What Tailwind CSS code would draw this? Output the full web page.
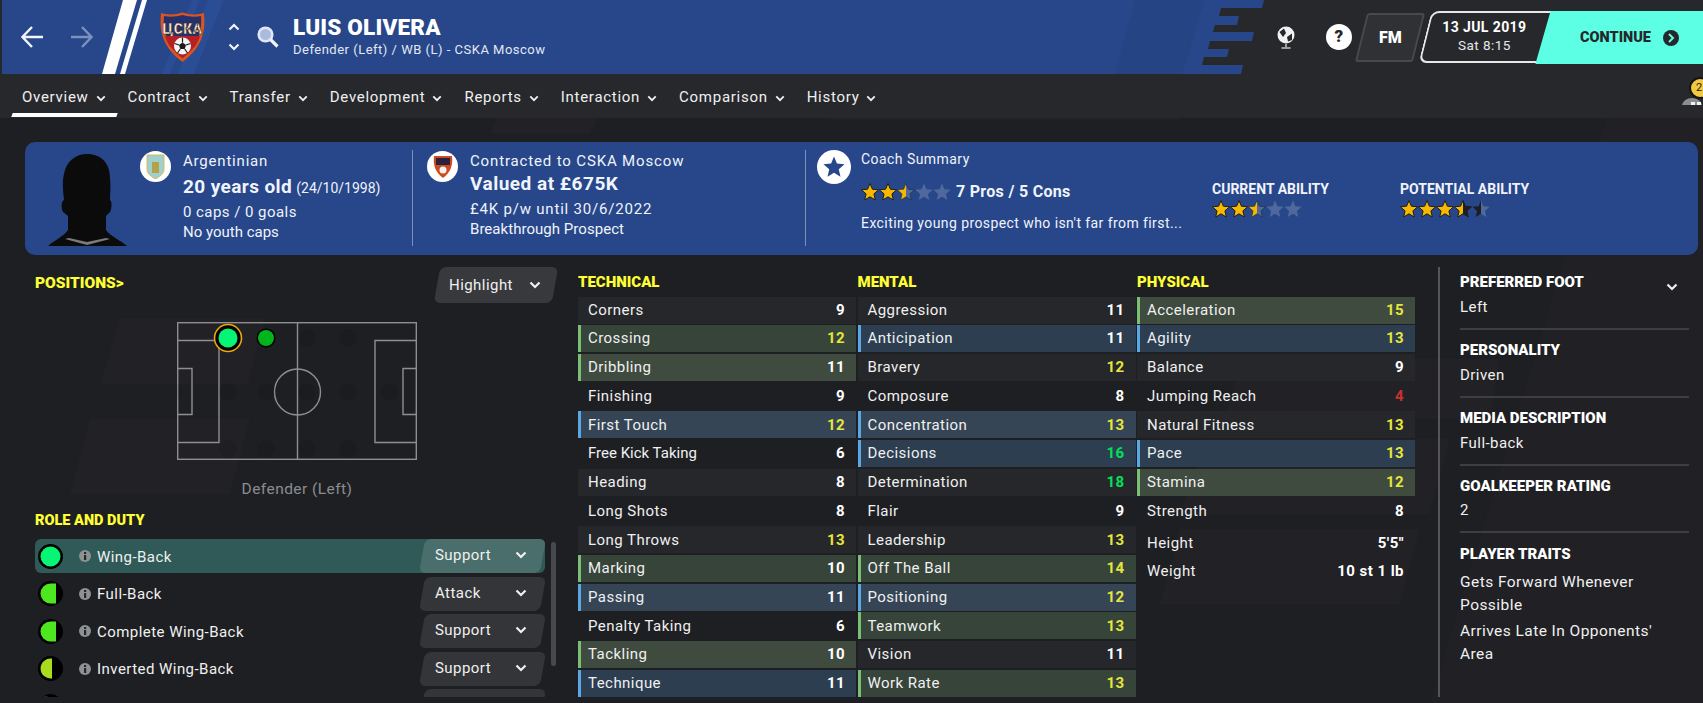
<!DOCTYPE html>
<html lang="en">
<head>
  <meta charset="UTF-8" />
  <title>Luis Olivera - Overview</title>
  <script src="https://cdn.jsdelivr.net/npm/@tailwindcss/browser@4"></script>
</head>
<body class="relative w-[1703px] h-[703px] overflow-hidden bg-[#1e1f23] text-[#f0f0f0] font-['Roboto',sans-serif] text-[15px] tracking-[0.45px]">

  <!-- shared icons -->
  <svg width="0" height="0" class="absolute">
    <defs>
      <symbol id="star" viewBox="0 0 18 18"><polygon points="9,0.5 11.4,6.2 17.6,6.8 12.9,10.9 14.3,17 9,13.8 3.7,17 5.1,10.9 0.4,6.8 6.6,6.2" /></symbol>
      <symbol id="chev" viewBox="0 0 12 8"><path d="M1.5 1.5 L6 6 L10.5 1.5" fill="none" stroke="currentColor" stroke-width="2.2" /></symbol>
      <symbol id="info" viewBox="0 0 12 12"><circle cx="6" cy="6" r="6" fill="#8d9190" /><rect x="5" y="5" width="2.2" height="5" fill="#26272b" /><rect x="5" y="2" width="2.2" height="2" fill="#26272b" /></symbol>
      <linearGradient id="halfGold"><stop offset="50%" stop-color="#f7b900" /><stop offset="50%" stop-color="#50699c" /></linearGradient>
      <linearGradient id="halfBlack"><stop offset="50%" stop-color="#f7b900" /><stop offset="50%" stop-color="#1d1e22" /></linearGradient>
      <linearGradient id="halfGrey"><stop offset="50%" stop-color="#1d1e22" /><stop offset="50%" stop-color="#50699c" /></linearGradient>
    </defs>
  </svg>

  <!-- faint background bands -->
  <svg class="absolute left-0 top-[74px]" width="1703" height="629" fill="#25262a" fill-opacity="0.4">
    <polygon points="120,245 265,245 248,310 100,310" />
    <polygon points="90,345 250,345 230,420 70,420" />
    <polygon points="1240,285 1500,285 1490,345 1225,345" />
    <polygon points="1205,365 1450,365 1430,440 1180,440" />
    <polygon points="1180,455 1420,455 1400,530 1160,530" />
    <polygon points="1620,0 1703,0 1703,629 1430,629" fill="#222327" />
    <polygon points="520,0 620,0 590,60 490,60" />
    <polygon points="850,0 1200,0 1180,46 830,46" />
  </svg>

  <!-- header -->
  <header class="relative h-[74px] flex items-center bg-[#27282c] overflow-hidden">
    <svg class="absolute left-0 top-0" width="1270" height="74">
      <polygon fill="#27478a" points="2,0 1264,0 1262,8 1221,8 1219,16 1239,16 1237,25 1215,25 1213,32 1254,32 1252,41 1210,41 1208,49 1229,49 1227,57 1204,57 1202,65 1243,65 1241,74 2,74" />
      <polygon fill="#2b4d95" points="192,0 200,0 170,74 162,74" />
      <polygon fill="#2b4d95" points="208,0 224,0 194,74 178,74" />
      <polygon fill="#24437f" points="1135,0 1205,0 1182,74 1115,74" fill-opacity="0.6" />
      <polygon fill="#ffffff" points="123,0 137,0 115,74 102,74" />
      <polygon fill="#ffffff" points="142,0 147,0 125,74 120,74" />
    </svg>
    <div class="relative flex items-center w-full pl-[21px]">
      <svg width="22" height="22" viewBox="0 0 22 22" fill="none" stroke="#f2f4fa" stroke-width="2.4"><path d="M11 1 L1.5 11 L11 21 M2 11 H22" /></svg>
      <svg class="ml-[28px]" width="22" height="22" viewBox="0 0 22 22" fill="none" stroke="#7d91be" stroke-width="2.4"><path d="M11 1 L20.5 11 L11 21 M20 11 H0" /></svg>
      <svg class="ml-[67px]" width="45" height="50" viewBox="0 0 45 50">
        <path d="M22.5 0.5 C30 3 38 3 44 1 C45.500 17 44 34 22.5 50 C1 34 -0.500 17 1 1 C7 3 15 3 22.5 0.500 Z" fill="#d9541e" />
        <path d="M22.5 3 C29 5 36 5 41 4 C42 17 40 31 22.5 46 C5 31 3 17 4 4 C9 5 16 5 22.5 3 Z" fill="#23316e" />
        <path d="M5 24 H40 C38 32 32 39 22.5 46 C13 39 7 32 5 24 Z" fill="#b62025" />
        <text x="22.5" y="22" text-anchor="middle" font-family="Roboto" font-weight="900" font-size="14" fill="#f7ecd0" stroke="#40200f" stroke-width="0.5" textLength="40" lengthAdjust="spacingAndGlyphs">ЦСКА</text>
        <circle cx="22.5" cy="34" r="8.500" fill="#f5f5f5" />
        <polygon points="22.5,30.500 26,33 24.700,37 20.300,37 19,33" fill="#1a1a1a" />
        <path d="M22.5 25.500 V30.500 M26 33 L30.500 31.500 M24.700 37 L27.500 41 M20.300 37 L17.500 41 M19 33 L14.500 31.500" stroke="#1a1a1a" stroke-width="1.200" />
      </svg>
      <div class="ml-[23px] flex flex-col gap-[12px] text-[#f2f4fa]">
        <svg class="rotate-180" width="12" height="8"><use href="#chev" /></svg>
        <svg width="12" height="8"><use href="#chev" /></svg>
      </div>
      <svg class="ml-[17px]" width="22" height="22" viewBox="0 0 22 22" fill="none"><circle cx="8.5" cy="8.5" r="6.8" stroke="#dfe6f5" stroke-width="2.6" fill="#a9bbdf" /><path d="M13.5 13.5 L20.5 20.5" stroke="#f2f4fa" stroke-width="3.2" /></svg>
      <div class="ml-[14px]">
        <div class="-mt-[2px] mb-[2px] text-[22.5px] leading-[26px] font-black tracking-[0.2px] text-white">LUIS OLIVERA</div>
        <div class="text-[13px] leading-[16px] text-[#e3e8f3] tracking-[0.5px]">Defender (Left) / WB (L) - CSKA Moscow</div>
      </div>

      <div class="ml-auto flex items-center">
        <svg width="20" height="23" viewBox="0 0 20 23"><circle cx="10" cy="9" r="8.500" fill="#f2f2f2" /><path d="M3.500 6 L8 2.500 L10 7 L7 11 Z M11 11 L16 7.500 L16 14 L12 15.500 Z" fill="#27282c" /><path d="M10 18 V21 M5.500 22 H14.500" stroke="#c4c4c4" stroke-width="1.600" /></svg>
        <div class="ml-[30px] w-[26px] h-[26px] rounded-full bg-white text-[#27282c] flex items-center justify-center text-[17px] font-black">?</div>
        <div class="ml-[9px] w-[58px] h-[49px] -skew-x-[14deg] bg-[#303135] border-2 border-[#48494d] rounded-[3px] flex items-center justify-center">
          <span class="skew-x-[14deg] text-[16px] font-black text-white tracking-normal">FM</span>
        </div>
        <div class="ml-[6px] w-[123px] h-[52px] -skew-x-[14deg] bg-[#27282c] border-2 border-r-0 border-[#e8e8e8] rounded-l-[8px]">
          <div class="skew-x-[14deg] flex flex-col items-center pr-[8px] pt-[4px]">
            <span class="text-[14px] leading-[20px] font-bold text-white tracking-[0.4px]">13 JUL 2019</span>
            <span class="text-[13.5px] leading-[17px] text-[#e8e8e8]">Sat 8:15</span>
          </div>
        </div>
        <div class="-ml-[5px] -mr-[20px] w-[180px] h-[53px] -skew-x-[16deg] bg-[#5cffe4]">
          <div class="skew-x-[16deg] h-full flex items-center pl-[37px] text-[#26272b]">
            <span class="text-[14.5px] font-black tracking-normal">CONTINUE</span>
            <svg class="ml-[12px]" width="16" height="16" viewBox="0 0 16 16"><circle cx="8" cy="8" r="8" fill="#26272b" /><path d="M6 4 L10 8 L6 12" fill="none" stroke="#5cffe4" stroke-width="2" /></svg>
          </div>
        </div>
      </div>
    </div>
  </header>

  <!-- tabs -->
  <nav class="relative h-[44px] flex items-center pl-[22px] pt-[2px] bg-[#27282c] text-[#f0f0f0] tracking-[0.72px]">
    <div class="relative flex items-center mr-[22px]">Overview<svg class="ml-[7px] mt-[2px]" width="10" height="7" ><use href="#chev" /></svg>
      <span class="absolute left-[-10px] right-[-11px] top-[27px] h-[4px] bg-white -skew-x-[20deg]"></span>
    </div>
    <div class="flex items-center mr-[22px]">Contract<svg class="ml-[7px] mt-[2px]" width="10" height="7"><use href="#chev" /></svg></div>
    <div class="flex items-center mr-[22px]">Transfer<svg class="ml-[7px] mt-[2px]" width="10" height="7"><use href="#chev" /></svg></div>
    <div class="flex items-center mr-[22px]">Development<svg class="ml-[7px] mt-[2px]" width="10" height="7"><use href="#chev" /></svg></div>
    <div class="flex items-center mr-[22px]">Reports<svg class="ml-[7px] mt-[2px]" width="10" height="7"><use href="#chev" /></svg></div>
    <div class="flex items-center mr-[22px]">Interaction<svg class="ml-[7px] mt-[2px]" width="10" height="7"><use href="#chev" /></svg></div>
    <div class="flex items-center mr-[22px]">Comparison<svg class="ml-[7px] mt-[2px]" width="10" height="7"><use href="#chev" /></svg></div>
    <div class="flex items-center mr-[22px]">History<svg class="ml-[7px] mt-[2px]" width="10" height="7"><use href="#chev" /></svg></div>
  </nav>

  <!-- notification badge -->
  <div class="absolute left-[1680px] top-[77px] w-[24px] h-[30px]">
    <svg class="absolute left-0 top-[19px]" width="24" height="9" viewBox="0 0 24 9"><path d="M2 9 C3 5 7 2 12 2 C17 2 21 5 22 9 Z" fill="#8d8d8d" /><rect x="11" y="6" width="4" height="3" fill="#f2f2f2" /><rect x="17" y="6" width="4" height="3" fill="#f2f2f2" /></svg>
    <div class="absolute left-[9px] top-0 w-[22px] h-[22px] rounded-full bg-[#f5c93e] border-2 border-[#141414] text-[11px] leading-[18px] pl-[5px] tracking-normal text-[#1a1a1a]">2</div>
  </div>

  <!-- summary card -->
  <section class="relative ml-[25px] mt-[24px] w-[1673px] h-[113px] rounded-[10px] bg-[#27478a] flex pt-[8px] text-[#f0f3fa]">
    <div class="w-[388px] h-[96px] border-r border-white/40 flex">
      <svg class="ml-[23px] mt-[4px]" width="79" height="92" viewBox="0 0 79 92">
        <path d="M39 0 C50 0 62 6 62 24 C63 32 62 40 62 46 C64 47 64 54 62 58 L58 62 L58 76 C62 82 72 86 79 92 L0 92 C7 86 16 82 20 76 L20 62 L15 58 C13 54 13 47 16 46 C15 36 14 28 16 20 C18 7 28 0 39 0 Z" fill="#0b0b0b" />
        <path d="M17 85 L39 91 L62 85 L58 84 L39 88 L21 84 Z" fill="#7b7b7b" />
      </svg>
      <div class="ml-[13px] mt-[1px] w-[31px] h-[31px] rounded-full bg-white flex items-center justify-center shrink-0">
        <svg width="19" height="25" viewBox="0 0 19 25"><path d="M1 1 H18 V15 C18 20 13 23 9.5 25 C6 23 1 20 1 15 Z" fill="#9fd0cf" stroke="#d8b952" /><rect x="6" y="8" width="7" height="11" fill="#b5a247" /></svg>
      </div>
      <div class="ml-[12px] text-[15px] tracking-[0.4px]">
        <div class="mt-[1px] leading-[20px] tracking-[0.8px]">Argentinian</div>
        <div class="mt-[4px] leading-[24px] whitespace-nowrap"><span class="text-[19px] font-bold tracking-[0.4px]">20 years old</span> <span class="text-[14px] tracking-normal">(24/10/1998)</span></div>
        <div class="mt-[2px] leading-[20px] tracking-[0.45px]">0 caps / 0 goals</div>
        <div class="leading-[20px] tracking-[0px]">No youth caps</div>
      </div>
    </div>
    <div class="w-[393px] h-[96px] border-r border-white/40 flex">
      <div class="ml-[14px] mt-[1px] w-[31px] h-[31px] rounded-full bg-white flex items-center justify-center shrink-0">
        <svg width="20" height="23" viewBox="0 0 20 23"><path d="M1 1 H19 C20 10 18 17 10 23 C2 17 0 10 1 1 Z" fill="#cf4a1d" /><path d="M3 3 H17 V10 H3 Z" fill="#2a2140" /><circle cx="10" cy="15" r="3.5" fill="#f2f2f2" /></svg>
      </div>
      <div class="ml-[12px] text-[15px]">
        <div class="mt-[1px] leading-[20px] tracking-[0.85px] whitespace-nowrap">Contracted to CSKA Moscow</div>
        <div class="mt-[1px] leading-[24px] text-[19px] font-bold tracking-[0.5px]">Valued at £675K</div>
        <div class="mt-[3px] leading-[20px] tracking-[0.8px]">£4K p/w until 30/6/2022</div>
        <div class="leading-[20px] tracking-[0.04px]">Breakthrough Prospect</div>
      </div>
    </div>
    <div class="w-[406px] flex">
      <div class="ml-[11px] w-[34px] h-[34px] rounded-full bg-white flex items-center justify-center shrink-0">
        <svg class="text-[#27478a]" width="22" height="22" fill="currentColor"><use href="#star" /></svg>
      </div>
      <div class="ml-[10px]">
        <div class="-mt-[1px] leading-[20px] text-[14px]">Coach Summary</div>
        <div class="mt-[13px] h-[20px] flex items-center">
          <svg width="18" height="18" fill="#f7b900" stroke="#1d1e22"><use href="#star" /></svg>
          <svg width="18" height="18" fill="#f7b900" stroke="#1d1e22"><use href="#star" /></svg>
          <svg width="18" height="18" fill="url(#halfGold)" stroke="#1d1e22" stroke-opacity="0.5"><use href="#star" /></svg>
          <svg width="18" height="18" fill="#50699c"><use href="#star" /></svg>
          <svg width="18" height="18" fill="#50699c"><use href="#star" /></svg>
          <span class="ml-[5px] text-[16px] font-bold tracking-[0.3px] whitespace-nowrap">7 Pros / 5 Cons</span>
        </div>
        <div class="mt-[11px] leading-[20px] text-[14px] tracking-[0.42px] whitespace-nowrap">Exciting young prospect who isn't far from first...</div>
      </div>
    </div>
    <div class="w-[188px] pt-[30px]">
      <div class="leading-[18px] text-[14px] font-bold tracking-normal whitespace-nowrap">CURRENT ABILITY</div>
      <div class="mt-[2px] flex">
        <svg width="18" height="18" fill="#f7b900" stroke="#1d1e22"><use href="#star" /></svg>
        <svg width="18" height="18" fill="#f7b900" stroke="#1d1e22"><use href="#star" /></svg>
        <svg width="18" height="18" fill="url(#halfGold)" stroke="#1d1e22" stroke-opacity="0.5"><use href="#star" /></svg>
        <svg width="18" height="18" fill="#50699c"><use href="#star" /></svg>
        <svg width="18" height="18" fill="#50699c"><use href="#star" /></svg>
      </div>
    </div>
    <div class="pt-[30px]">
      <div class="leading-[18px] text-[14px] font-bold tracking-normal whitespace-nowrap">POTENTIAL ABILITY</div>
      <div class="mt-[2px] flex">
        <svg width="18" height="18" fill="#f7b900" stroke="#1d1e22"><use href="#star" /></svg>
        <svg width="18" height="18" fill="#f7b900" stroke="#1d1e22"><use href="#star" /></svg>
        <svg width="18" height="18" fill="#f7b900" stroke="#1d1e22"><use href="#star" /></svg>
        <svg width="18" height="18" fill="url(#halfBlack)" stroke="#1d1e22"><use href="#star" /></svg>
        <svg width="18" height="18" fill="url(#halfGrey)"><use href="#star" /></svg>
      </div>
    </div>
  </section>

  <main class="relative flex pl-[35px] h-[448px] overflow-hidden">
    <!-- positions and roles -->
    <div class="w-[523px] shrink-0">
      <div class="pt-[12px] flex justify-between">
        <div class="mt-[6px] text-[15.500px] leading-[20px] font-black tracking-normal text-[#ffff33]">POSITIONS&gt;</div>
        <div class="w-[118px] mr-[3px] h-[36px] -skew-x-[10deg] rounded-[6px] bg-[#38393d]">
          <div class="skew-x-[10deg] h-full flex items-center justify-between pl-[12px] pr-[14px]">Highlight<svg width="12" height="8"><use href="#chev" /></svg></div>
        </div>
      </div>
      <svg class="ml-[142px] mt-[19px]" width="240" height="138" viewBox="0 0 240 138" fill="none" stroke="#8f8f8f" stroke-width="1.4">
        <rect x="0.7" y="0.7" width="238.6" height="136.6" />
        <path d="M0 18.5 H42 V120.5 H0 M0 46.5 H15 V92.5 H0 M240 18.5 H198 V120.5 H240 M240 46.5 H226 V92.5 H240 M120.5 0 V138" />
        <circle cx="120.5" cy="70" r="23" />
        <g fill="#000" fill-opacity="0.07" stroke="none">
          <circle cx="130" cy="16" r="9" /><circle cx="171" cy="16" r="9" />
          <circle cx="-3" cy="70" r="9" /><circle cx="51" cy="70" r="9" /><circle cx="89" cy="70" r="9" /><circle cx="130" cy="70" r="9" /><circle cx="171" cy="70" r="9" /><circle cx="213" cy="70" r="9" />
          <circle cx="51" cy="127" r="9" /><circle cx="89" cy="127" r="9" /><circle cx="130" cy="127" r="9" /><circle cx="171" cy="127" r="9" />
        </g>
        <circle cx="51" cy="16" r="13.5" fill="#000" stroke="#e9a90e" stroke-width="1.6" />
        <circle cx="51" cy="16" r="9.5" fill="#06f574" stroke="none" />
        <circle cx="89" cy="16" r="9.5" fill="#000" stroke="none" />
        <circle cx="89" cy="16" r="8" fill="#02b41c" stroke="none" />
      </svg>
      <div class="mt-[19px] ml-[142px] w-[240px] text-center leading-[20px] text-[15.500px] text-[#8b8c8f]">Defender (Left)</div>

      <div class="mt-[12px] text-[14.5px] leading-[20px] font-black tracking-normal text-[#ffff33]">ROLE AND DUTY</div>
      <div class="mt-[8px] h-[158px] overflow-hidden flex">
        <div class="w-[510px] flex flex-col gap-[3.5px]">
          <div class="h-[34px] shrink-0 flex items-center pl-[3px] rounded-[6px] bg-[#2f5a58]">
            <svg width="25" height="25"><circle cx="12.5" cy="12.5" r="12.5" fill="#000" /><circle cx="12.5" cy="12.5" r="10" fill="#06f574" /></svg>
            <svg class="ml-[16px]" width="12" height="12"><use href="#info" /></svg>
            <span class="ml-[6px] mt-[2px]">Wing-Back</span>
            <div class="ml-auto mr-[2px] w-[121px] h-[34px] -skew-x-[10deg] rounded-[6px] bg-[#4a6e6b]">
              <div class="skew-x-[10deg] h-full flex items-center justify-between pb-[2px] pl-[13px] pr-[16px]">Support<svg width="12" height="8"><use href="#chev" /></svg></div>
            </div>
          </div>
          <div class="h-[34px] shrink-0 flex items-center pl-[3px]">
            <svg width="25" height="25"><circle cx="12.5" cy="12.5" r="12.5" fill="#000" /><path d="M12.5 2.5 H18 V22.5 H12.5 A10 10 0 0 1 12.5 2.5 Z" fill="#4ee61e" /></svg>
            <svg class="ml-[16px]" width="12" height="12"><use href="#info" /></svg>
            <span class="ml-[6px] mt-[2px]">Full-Back</span>
            <div class="ml-auto mr-[2px] w-[121px] h-[34px] -skew-x-[10deg] rounded-[6px] bg-[#343538]">
              <div class="skew-x-[10deg] h-full flex items-center justify-between pb-[2px] pl-[13px] pr-[16px]">Attack<svg width="12" height="8"><use href="#chev" /></svg></div>
            </div>
          </div>
          <div class="h-[34px] shrink-0 flex items-center pl-[3px]">
            <svg width="25" height="25"><circle cx="12.5" cy="12.5" r="12.5" fill="#000" /><path d="M12.5 2.5 H18 V22.5 H12.5 A10 10 0 0 1 12.5 2.5 Z" fill="#4ee61e" /></svg>
            <svg class="ml-[16px]" width="12" height="12"><use href="#info" /></svg>
            <span class="ml-[6px] mt-[2px]">Complete Wing-Back</span>
            <div class="ml-auto mr-[2px] w-[121px] h-[34px] -skew-x-[10deg] rounded-[6px] bg-[#343538]">
              <div class="skew-x-[10deg] h-full flex items-center justify-between pb-[2px] pl-[13px] pr-[16px]">Support<svg width="12" height="8"><use href="#chev" /></svg></div>
            </div>
          </div>
          <div class="h-[34px] shrink-0 flex items-center pl-[3px]">
            <svg width="25" height="25"><circle cx="12.5" cy="12.5" r="12.5" fill="#000" /><path d="M14 2.6 A10 10 0 1 0 14 22.4 Z" fill="#a9dc1e" /></svg>
            <svg class="ml-[16px]" width="12" height="12"><use href="#info" /></svg>
            <span class="ml-[6px] mt-[2px]">Inverted Wing-Back</span>
            <div class="ml-auto mr-[2px] w-[121px] h-[34px] -skew-x-[10deg] rounded-[6px] bg-[#343538]">
              <div class="skew-x-[10deg] h-full flex items-center justify-between pb-[2px] pl-[13px] pr-[16px]">Support<svg width="12" height="8"><use href="#chev" /></svg></div>
            </div>
          </div>
          <div class="h-[34px] shrink-0 flex items-center pl-[3px]">
            <svg width="25" height="25"><circle cx="12.5" cy="12.5" r="12.5" fill="#000" /><path d="M10 2.8 A10 10 0 1 0 10 22.2 Z" fill="#5c6a10" /></svg>
            <div class="ml-auto mr-[2px] w-[121px] h-[34px] -skew-x-[10deg] rounded-[6px] bg-[#343538]"></div>
          </div>
        </div>
        <div class="ml-[6px] mt-[3px] w-[5px] h-[124px] rounded-full bg-[#48494d]"></div>
      </div>
    </div>

    <!-- attributes -->
    <div class="ml-[20px] w-[837px] shrink-0 pt-[17px] grid grid-cols-[278px_278px_278px] gap-x-[1.5px] content-start">
      <div>
        <div class="h-[20px] mb-[4.500px] text-[15px] leading-[20px] font-black tracking-normal text-[#ffff33]">TECHNICAL</div>
        <div class="flex flex-col gap-[1.73px]">
          <div class="h-[27px] flex items-center justify-between border-l-[3px] border-transparent pl-[7px] pr-[11px] bg-[#26272b]"><span>Corners</span><b class="text-white">9</b></div>
          <div class="h-[27px] flex items-center justify-between border-l-[3px] border-[#7ac074] pl-[7px] pr-[11px] bg-[#36443a]"><span>Crossing</span><b class="text-[#e6e63c]">12</b></div>
          <div class="h-[27px] flex items-center justify-between border-l-[3px] border-[#7ac074] pl-[7px] pr-[11px] bg-[#3f4b3f]"><span>Dribbling</span><b class="text-white">11</b></div>
          <div class="h-[27px] flex items-center justify-between border-l-[3px] border-transparent pl-[7px] pr-[11px]"><span>Finishing</span><b class="text-white">9</b></div>
          <div class="h-[27px] flex items-center justify-between border-l-[3px] border-[#5aa7e6] pl-[7px] pr-[11px] bg-[#354555]"><span>First Touch</span><b class="text-[#e6e63c]">12</b></div>
          <div class="h-[27px] flex items-center justify-between border-l-[3px] border-transparent pl-[7px] pr-[11px]"><span class="tracking-[0px]">Free Kick Taking</span><b class="text-white">6</b></div>
          <div class="h-[27px] flex items-center justify-between border-l-[3px] border-transparent pl-[7px] pr-[11px] bg-[#26272b]"><span>Heading</span><b class="text-white">8</b></div>
          <div class="h-[27px] flex items-center justify-between border-l-[3px] border-transparent pl-[7px] pr-[11px]"><span>Long Shots</span><b class="text-white">8</b></div>
          <div class="h-[27px] flex items-center justify-between border-l-[3px] border-transparent pl-[7px] pr-[11px] bg-[#26272b]"><span>Long Throws</span><b class="text-[#e6e63c]">13</b></div>
          <div class="h-[27px] flex items-center justify-between border-l-[3px] border-[#7ac074] pl-[7px] pr-[11px] bg-[#36443a]"><span>Marking</span><b class="text-white">10</b></div>
          <div class="h-[27px] flex items-center justify-between border-l-[3px] border-[#5aa7e6] pl-[7px] pr-[11px] bg-[#354555]"><span>Passing</span><b class="text-white">11</b></div>
          <div class="h-[27px] flex items-center justify-between border-l-[3px] border-transparent pl-[7px] pr-[11px]"><span>Penalty Taking</span><b class="text-white">6</b></div>
          <div class="h-[27px] flex items-center justify-between border-l-[3px] border-[#7ac074] pl-[7px] pr-[11px] bg-[#3f4b3f]"><span>Tackling</span><b class="text-white">10</b></div>
          <div class="h-[27px] flex items-center justify-between border-l-[3px] border-[#5aa7e6] pl-[7px] pr-[11px] bg-[#2c3e50]"><span>Technique</span><b class="text-white">11</b></div>
        </div>
      </div>
      <div>
        <div class="h-[20px] mb-[4.500px] text-[15px] leading-[20px] font-black tracking-normal text-[#ffff33]">MENTAL</div>
        <div class="flex flex-col gap-[1.73px]">
          <div class="h-[27px] flex items-center justify-between border-l-[3px] border-transparent pl-[7px] pr-[11px] bg-[#26272b]"><span>Aggression</span><b class="text-white">11</b></div>
          <div class="h-[27px] flex items-center justify-between border-l-[3px] border-[#5aa7e6] pl-[7px] pr-[11px] bg-[#2c3e50]"><span>Anticipation</span><b class="text-white">11</b></div>
          <div class="h-[27px] flex items-center justify-between border-l-[3px] border-transparent pl-[7px] pr-[11px] bg-[#26272b]"><span>Bravery</span><b class="text-[#e6e63c]">12</b></div>
          <div class="h-[27px] flex items-center justify-between border-l-[3px] border-transparent pl-[7px] pr-[11px]"><span>Composure</span><b class="text-white">8</b></div>
          <div class="h-[27px] flex items-center justify-between border-l-[3px] border-[#5aa7e6] pl-[7px] pr-[11px] bg-[#354555]"><span>Concentration</span><b class="text-[#e6e63c]">13</b></div>
          <div class="h-[27px] flex items-center justify-between border-l-[3px] border-[#5aa7e6] pl-[7px] pr-[11px] bg-[#2c3e50]"><span>Decisions</span><b class="text-[#00e05a]">16</b></div>
          <div class="h-[27px] flex items-center justify-between border-l-[3px] border-transparent pl-[7px] pr-[11px] bg-[#26272b]"><span>Determination</span><b class="text-[#00e05a]">18</b></div>
          <div class="h-[27px] flex items-center justify-between border-l-[3px] border-transparent pl-[7px] pr-[11px]"><span>Flair</span><b class="text-white">9</b></div>
          <div class="h-[27px] flex items-center justify-between border-l-[3px] border-transparent pl-[7px] pr-[11px] bg-[#26272b]"><span>Leadership</span><b class="text-[#e6e63c]">13</b></div>
          <div class="h-[27px] flex items-center justify-between border-l-[3px] border-[#7ac074] pl-[7px] pr-[11px] bg-[#36443a]"><span>Off The Ball</span><b class="text-[#e6e63c]">14</b></div>
          <div class="h-[27px] flex items-center justify-between border-l-[3px] border-[#5aa7e6] pl-[7px] pr-[11px] bg-[#354555]"><span>Positioning</span><b class="text-[#e6e63c]">12</b></div>
          <div class="h-[27px] flex items-center justify-between border-l-[3px] border-[#7ac074] pl-[7px] pr-[11px] bg-[#36443a]"><span>Teamwork</span><b class="text-[#e6e63c]">13</b></div>
          <div class="h-[27px] flex items-center justify-between border-l-[3px] border-transparent pl-[7px] pr-[11px] bg-[#26272b]"><span>Vision</span><b class="text-white">11</b></div>
          <div class="h-[27px] flex items-center justify-between border-l-[3px] border-[#7ac074] pl-[7px] pr-[11px] bg-[#36443a]"><span>Work Rate</span><b class="text-[#e6e63c]">13</b></div>
        </div>
      </div>
      <div>
        <div class="h-[20px] mb-[4.500px] text-[15px] leading-[20px] font-black tracking-normal text-[#ffff33]">PHYSICAL</div>
        <div class="flex flex-col gap-[1.73px]">
          <div class="h-[27px] flex items-center justify-between border-l-[3px] border-[#7ac074] pl-[7px] pr-[11px] bg-[#3f4b3f]"><span>Acceleration</span><b class="text-[#e6e63c]">15</b></div>
          <div class="h-[27px] flex items-center justify-between border-l-[3px] border-[#5aa7e6] pl-[7px] pr-[11px] bg-[#2c3e50]"><span>Agility</span><b class="text-[#e6e63c]">13</b></div>
          <div class="h-[27px] flex items-center justify-between border-l-[3px] border-transparent pl-[7px] pr-[11px] bg-[#26272b]"><span>Balance</span><b class="text-white">9</b></div>
          <div class="h-[27px] flex items-center justify-between border-l-[3px] border-transparent pl-[7px] pr-[11px]"><span>Jumping Reach</span><b class="text-[#c83232]">4</b></div>
          <div class="h-[27px] flex items-center justify-between border-l-[3px] border-transparent pl-[7px] pr-[11px] bg-[#26272b]"><span>Natural Fitness</span><b class="text-[#e6e63c]">13</b></div>
          <div class="h-[27px] flex items-center justify-between border-l-[3px] border-[#5aa7e6] pl-[7px] pr-[11px] bg-[#2c3e50]"><span>Pace</span><b class="text-[#e6e63c]">13</b></div>
          <div class="h-[27px] flex items-center justify-between border-l-[3px] border-[#7ac074] pl-[7px] pr-[11px] bg-[#3f4b3f]"><span>Stamina</span><b class="text-[#e6e63c]">12</b></div>
          <div class="h-[27px] flex items-center justify-between border-l-[3px] border-transparent pl-[7px] pr-[11px]"><span>Strength</span><b class="text-white">8</b></div>
        </div>
        <div class="mt-[5px] h-[28px] flex items-center justify-between border-l-[3px] border-transparent pl-[7px] pr-[11px]"><span>Height</span><b class="text-white">5'5"</b></div>
        <div class="h-[28px] flex items-center justify-between border-l-[3px] border-transparent pl-[7px] pr-[11px]"><span>Weight</span><b class="text-white">10 st 1 lb</b></div>
      </div>
    </div>

    <!-- divider and player details -->
    <div class="ml-[23px] mt-[12px] w-[2px] h-[430px] bg-[#55565a] shrink-0"></div>
    <div class="ml-[20px] w-[229px] shrink-0 pt-[17px]">
      <div class="flex justify-between pr-[11px]">
        <div class="leading-[20px] text-[15px] font-black tracking-normal text-white">PREFERRED FOOT</div>
        <svg class="mt-[11px]" width="12" height="8"><use href="#chev" /></svg>
      </div>
      <div class="mt-[5px] leading-[20px]">Left</div>
      <div class="mt-[11px] h-[2px] bg-[#3d3e42]"></div>
      <div class="mt-[10px] leading-[20px] text-[15px] font-black tracking-normal text-white">PERSONALITY</div>
      <div class="mt-[5px] leading-[20px]">Driven</div>
      <div class="mt-[11px] h-[2px] bg-[#3d3e42]"></div>
      <div class="mt-[10px] leading-[20px] text-[15px] font-black tracking-normal text-white">MEDIA DESCRIPTION</div>
      <div class="mt-[5px] leading-[20px]">Full-back</div>
      <div class="mt-[11px] h-[2px] bg-[#3d3e42]"></div>
      <div class="mt-[10px] leading-[20px] text-[15px] font-black tracking-normal text-white">GOALKEEPER RATING</div>
      <div class="mt-[4px] leading-[20px]">2</div>
      <div class="mt-[11px] h-[2px] bg-[#3d3e42]"></div>
      <div class="mt-[11px] leading-[20px] text-[15px] font-black tracking-normal text-white">PLAYER TRAITS</div>
      <div class="mt-[7px] w-[205px] leading-[23px] text-[15.500px]">Gets Forward Whenever Possible</div>
      <div class="mt-[3px] w-[205px] leading-[23px] text-[15.500px]">Arrives Late In Opponents' Area</div>
    </div>
  </main>
</body>
</html>
